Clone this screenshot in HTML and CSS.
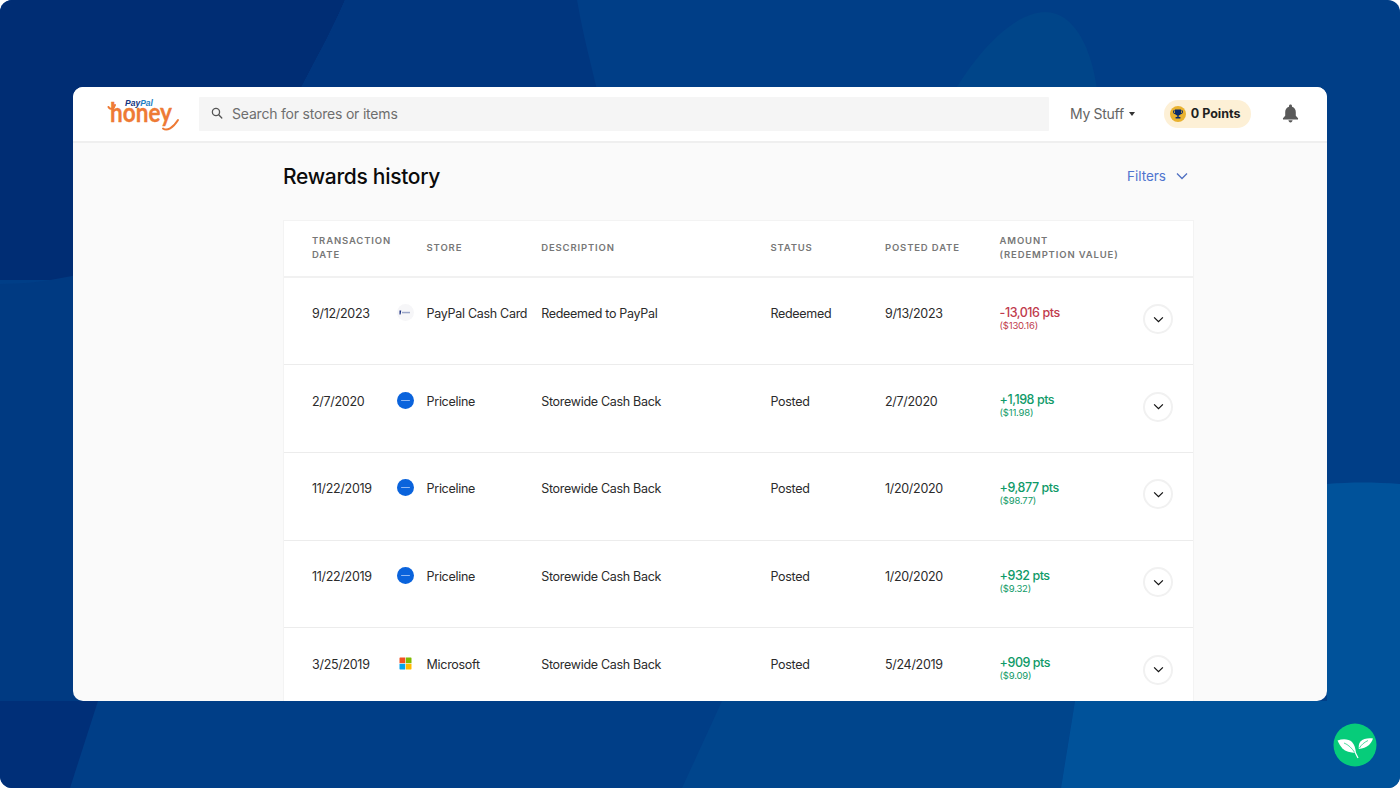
FILE: index.html
```html
<!DOCTYPE html>
<html lang="en">
<head>
<meta charset="utf-8">
<title>Rewards history</title>
<link rel="stylesheet" href="styles.css">
</head>
<body>
<div class="slide">
  <svg class="backdrop" viewBox="0 0 1400 788" aria-hidden="true">
    <rect width="1400" height="788" fill="#003e87"/>
    <path d="M0 0H345C330 35 315 60 300 90L290 280H0Z" fill="#002d74"/>
    <path d="M345 0H577C583 35 590 60 597 90L600 300H290L300 90C315 60 330 35 345 0Z" fill="#00367f"/>
    <path d="M955 90C985 40 1020 12 1045 12C1075 12 1092 50 1097 90Z" fill="#004589"/>
    <path d="M0 284C30 284 55 280 80 274V701H0Z" fill="#003a82"/>
    <path d="M0 701H98L70 788H0Z" fill="#002f78"/>
    <path d="M722 701H1075L1061 788H682Z" fill="#00458c"/>
    <path d="M1075 701H1400V788H1061Z" fill="#00529a"/>
    <path d="M1327 484C1350 482 1375 482 1400 484V701H1327Z" fill="#00529a"/>
  </svg>

  <main class="window">
    <header class="topbar">
      <svg class="logo" viewBox="0 0 72 34" role="img" aria-label="PayPal Honey">
        <path class="logo-flourish" d="M1.500 10C3 13 7 12 8 8M56 31.500C60 34.500 66 31 71 23"/>
        <text class="logo-paypal" x="18" y="8.500">Pay<tspan class="logo-pal">Pal</tspan></text>
        <text class="logo-honey" x="3" y="25" textLength="62" lengthAdjust="spacingAndGlyphs">honey</text>
      </svg>
      <div class="search">
        <svg class="search-icon" viewBox="0 0 14 14"><circle cx="5.800" cy="5.800" r="4.200"/><path d="M9 9l3.600 3.800"/></svg>
        <span>Search for stores or items</span>
      </div>
      <div class="mystuff">My Stuff<span class="caret"></span></div>
      <div class="points">
        <svg class="trophy" viewBox="0 0 16 16">
          <circle cx="8" cy="8" r="8" fill="#e9b22f"/>
          <path d="M4.900 3.600H11.100V4.500H12.900V6C12.900 7.400 11.900 8.100 10.700 8.300C10.300 9 9.600 9.400 8.700 9.500V11H10.400V12.400H5.600V11H7.300V9.500C6.400 9.400 5.700 9 5.300 8.300C4.100 8.100 3.100 7.400 3.100 6V4.500H4.900ZM4 5.300V6C4 6.600 4.400 7.100 5 7.300V5.300ZM12 5.300H11V7.300C11.600 7.100 12 6.600 12 6Z" fill="#0a2a6b"/>
        </svg>
        <span>0 Points</span>
      </div>
      <svg class="bell" viewBox="0 0 18 20"><path d="M9 0.500C8 0.500 7.400 1.200 7.400 2.200V2.800C4.800 3.500 3.400 5.600 3.400 8.300V12.500L1 15V16.300H17V15L14.600 12.500V8.300C14.600 5.600 13.200 3.500 10.600 2.800V2.200C10.600 1.200 10 0.500 9 0.500ZM6.800 17.200C6.900 18.500 7.800 19.500 9 19.500C10.200 19.500 11.100 18.500 11.200 17.200Z"/></svg>
    </header>

    <div class="content">
      <div class="titlebar">
        <h1>Rewards history</h1>
        <div class="filters">Filters
          <svg class="filters-chev" viewBox="0 0 12 8"><path d="M1 1.500L6 6.500L11 1.500"/></svg>
        </div>
      </div>

      <section class="table">
        <div class="thead">
          <div>TRANSACTION<br>DATE</div>
          <div>STORE</div>
          <div>DESCRIPTION</div>
          <div>STATUS</div>
          <div>POSTED DATE</div>
          <div class="th-wide">AMOUNT<br>(REDEMPTION VALUE)</div>
        </div>

        <div class="row">
          <div class="date">9/12/2023<span class="store-ico ico-paypal"><svg viewBox="0 0 17 17"><path d="M2.500 6.500H4.200L3.600 10.500H2.500Z" fill="#1a2f80"/><rect x="5" y="7.800" width="8" height="1.500" fill="#9aa5c8"/></svg></span></div>
          <div>PayPal Cash Card</div>
          <div>Redeemed to PayPal</div>
          <div>Redeemed</div>
          <div>9/13/2023</div>
          <div class="amount neg"><div class="pts">-13,016 pts</div><div class="val">($130.16)</div></div>
          <button class="expand" type="button"><svg viewBox="0 0 12 8"><path d="M1 1.500L6 6.500L11 1.500"/></svg></button>
        </div>

        <div class="row">
          <div class="date">2/7/2020<span class="store-ico ico-priceline"><svg viewBox="0 0 17 17"><rect x="4" y="8" width="9" height="1" rx=".5" fill="#8fb8f5"/></svg></span></div>
          <div>Priceline</div>
          <div>Storewide Cash Back</div>
          <div>Posted</div>
          <div>2/7/2020</div>
          <div class="amount pos"><div class="pts">+1,198 pts</div><div class="val">($11.98)</div></div>
          <button class="expand" type="button"><svg viewBox="0 0 12 8"><path d="M1 1.500L6 6.500L11 1.500"/></svg></button>
        </div>

        <div class="row">
          <div class="date">11/22/2019<span class="store-ico ico-priceline"><svg viewBox="0 0 17 17"><rect x="4" y="8" width="9" height="1" rx=".5" fill="#8fb8f5"/></svg></span></div>
          <div>Priceline</div>
          <div>Storewide Cash Back</div>
          <div>Posted</div>
          <div>1/20/2020</div>
          <div class="amount pos"><div class="pts">+9,877 pts</div><div class="val">($98.77)</div></div>
          <button class="expand" type="button"><svg viewBox="0 0 12 8"><path d="M1 1.500L6 6.500L11 1.500"/></svg></button>
        </div>

        <div class="row">
          <div class="date">11/22/2019<span class="store-ico ico-priceline"><svg viewBox="0 0 17 17"><rect x="4" y="8" width="9" height="1" rx=".5" fill="#8fb8f5"/></svg></span></div>
          <div>Priceline</div>
          <div>Storewide Cash Back</div>
          <div>Posted</div>
          <div>1/20/2020</div>
          <div class="amount pos"><div class="pts">+932 pts</div><div class="val">($9.32)</div></div>
          <button class="expand" type="button"><svg viewBox="0 0 12 8"><path d="M1 1.500L6 6.500L11 1.500"/></svg></button>
        </div>

        <div class="row">
          <div class="date">3/25/2019<span class="store-ico"><svg viewBox="0 0 17 17"><rect x="2.500" y="2.500" width="5.700" height="5.700" fill="#f25022"/><rect x="8.800" y="2.500" width="5.700" height="5.700" fill="#7fba00"/><rect x="2.500" y="8.800" width="5.700" height="5.700" fill="#00a4ef"/><rect x="8.800" y="8.800" width="5.700" height="5.700" fill="#ffb900"/></svg></span></div>
          <div>Microsoft</div>
          <div>Storewide Cash Back</div>
          <div>Posted</div>
          <div>5/24/2019</div>
          <div class="amount pos"><div class="pts">+909 pts</div><div class="val">($9.09)</div></div>
          <button class="expand" type="button"><svg viewBox="0 0 12 8"><path d="M1 1.500L6 6.500L11 1.500"/></svg></button>
        </div>
      </section>
    </div>
  </main>

  <svg class="badge" viewBox="0 0 44 44" aria-hidden="true">
    <circle cx="22" cy="22" r="21.500" fill="#06cc7a"/>
    <path d="M4.500 17.500C10 15.500 16 16 19 19C21.500 21.500 22.500 25.500 23 30C17 29.500 12.500 28.500 9.500 25.500C7.500 23.500 6 20.500 4.500 17.500Z" fill="#fff"/>
    <path d="M40 15.500C35 14.800 30 15.800 27.500 18.500C25.800 20.500 25.500 23 25.800 26C29.500 25.500 33.500 24.500 36 22C37.800 20 39.200 18 40 15.500Z" fill="#fff"/>
    <path d="M11 20C15 21.500 19 25 22 30" fill="none" stroke="#06cc7a" stroke-width=".7"/>
    <path d="M26.500 25C28 22 31 19.500 35 17.500" fill="none" stroke="#06cc7a" stroke-width=".7"/>
    <path d="M22 29L25 35" fill="none" stroke="#fff" stroke-width="1.200"/>
  </svg>
</div>
</body>
</html>
```
FILE: styles.css
```css
* { box-sizing: border-box; }
html, body { margin: 0; height: 100%; background: #fff; }
body { font-family: Inter, "Liberation Sans", sans-serif; overflow: hidden; }

.slide {
  position: relative;
  width: 1400px;
  height: 788px;
  padding: 87px 73px;
  border-radius: 12px;
  overflow: hidden;
}
.backdrop { position: absolute; inset: 0; width: 1400px; height: 788px; display: block; }

.window {
  position: relative;
  width: 1254px;
  height: 614px;
  background: #fafafa;
  border-radius: 10px;
  overflow: hidden;
}

.topbar {
  display: flex;
  align-items: center;
  height: 56px;
  padding: 0 28.500px 1px 34px;
  background: #fff;
  border-bottom: 2px solid #efefef;
}
.logo { width: 72px; height: 34px; flex: none; margin-right: 20px; overflow: visible; }
.logo-flourish { fill: none; stroke: #ee7a35; stroke-width: 2; stroke-linecap: round; }
.logo-paypal { font: italic 700 8.500px "Liberation Sans", sans-serif; fill: #14357f; }
.logo-pal { fill: #1f7fc4; }
.logo-honey { font: 700 26px Lato, "DejaVu Sans", sans-serif; fill: #ee7a35; stroke: #ee7a35; stroke-width: .3; stroke-linejoin: round; }

.search {
  flex: none;
  display: flex;
  align-items: center;
  gap: 9px;
  width: 850px;
  height: 34px;
  margin-top: 1px;
  padding: 0 0 2px 12px;
  background: #f5f5f5;
  color: #6e6e6e;
  font-size: 14px;
  letter-spacing: -0.200px;
  border-radius: 1px;
}
.search-icon { width: 12px; height: 12px; fill: none; stroke: #555; stroke-width: 1.500; stroke-linecap: round; flex: none; }

.mystuff {
  display: flex;
  align-items: center;
  gap: 5px;
  margin-left: 21px;
  color: #646464;
  font-size: 14px;
  letter-spacing: -0.300px;
}
.caret {
  width: 0; height: 0;
  border-left: 3.500px solid transparent;
  border-right: 3.500px solid transparent;
  border-top: 4px solid #333;
}

.points {
  display: flex;
  align-items: center;
  gap: 5px;
  height: 28px;
  margin-left: 29px;
  padding: 0 10px 0 6px;
  border-radius: 14px;
  background: #fdf0d6;
  color: #1f1f1f;
  font-size: 12.500px;
  font-weight: 700;
}
.trophy { width: 16px; height: 16px; flex: none; }
.bell { width: 17px; height: 19px; margin-left: auto; fill: #595959; flex: none; }

.content { padding: 0 133px 0 210px; }

.titlebar {
  display: flex;
  justify-content: space-between;
  align-items: center;
  height: 68px;
  padding-top: 1px;
  padding-bottom: 2px;
  margin-bottom: 9px;
}
h1 { margin: 0; font-size: 21px; font-weight: 500; color: #0b0b0b; letter-spacing: -0.300px; }
.filters {
  display: flex;
  align-items: center;
  gap: 10px;
  margin-bottom: 1px;
  padding-right: 6px;
  color: #4f74cf;
  font-size: 13.500px;
}
.filters-chev { width: 12px; height: 8px; fill: none; stroke: #4f6fc0; stroke-width: 1.300; }

.table {
  width: 911px;
  background: #fff;
  border: 1px solid #f3f3f3;
  border-bottom: 0;
}
.thead, .row {
  display: grid;
  grid-template-columns: 114.600px 114.600px 229.200px 114.600px 114.600px 143.500px 30px;
  padding-left: 28px;
}
.thead {
  height: 56.500px;
  align-items: center;
  border-bottom: 2px solid #f1f1f1;
  color: #777;
  font-size: 9.500px;
  font-weight: 600;
  line-height: 14px;
  letter-spacing: 0.850px;
}
.th-wide { white-space: nowrap; }

.row {
  height: 87.700px;
  padding-top: 26.500px;
  border-bottom: 1px solid #ececec;
  color: #2b2b2b;
  font-size: 12.500px;
  letter-spacing: -0.300px;
  line-height: 20px;
  align-items: start;
}
.date { display: flex; justify-content: space-between; align-items: flex-start; padding-right: 13px; }
.store-ico { width: 17px; height: 17px; border-radius: 50%; flex: none; overflow: hidden; display: block; margin-top: 0; }
.store-ico svg { display: block; width: 17px; height: 17px; }
.ico-paypal { background: #f6f6f8; }
.ico-priceline { background: #0a63dc; }

.amount { margin-top: -0.500px; }
.pts { font-size: 12.500px; font-weight: 500; line-height: 17px; letter-spacing: -0.450px; }
.val { font-size: 9.500px; line-height: 9px; letter-spacing: -0.200px; }
.neg { color: #c03a4c; }
.pos { color: #0f9a68; }

.expand {
  display: flex;
  align-items: center;
  justify-content: center;
  width: 30px;
  height: 30px;
  margin-top: 0;
  padding: 0;
  border: 2px solid #f1f1f1;
  border-radius: 50%;
  background: #fff;
}
.expand svg { width: 11px; height: 7px; fill: none; stroke: #111; stroke-width: 1.400; }

.badge { position: absolute; left: 1333px; top: 723px; width: 44px; height: 44px; }
```
